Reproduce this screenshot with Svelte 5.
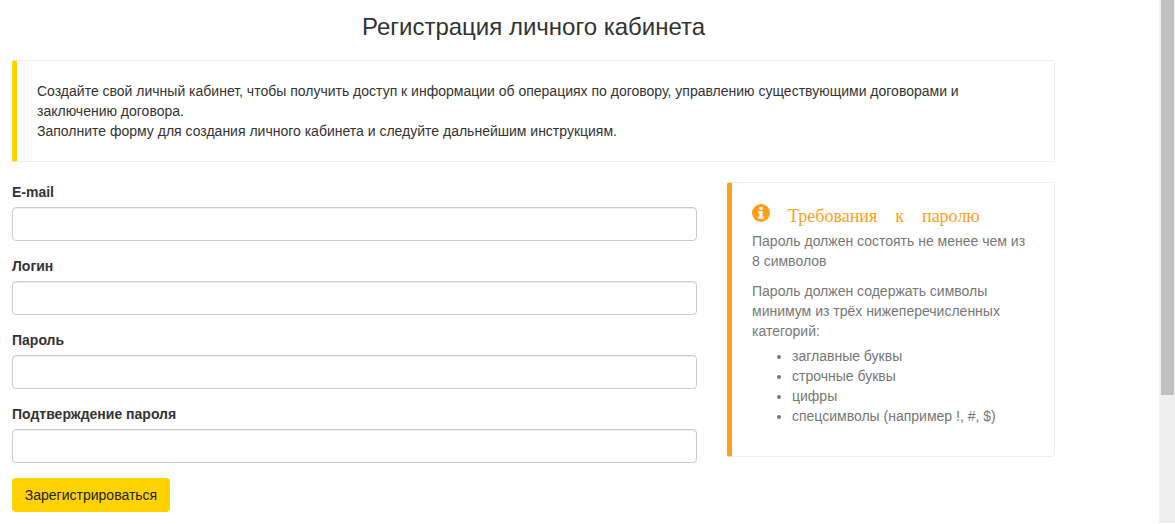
<script>
  const fields = ['E-mail', 'Логин', 'Пароль', 'Подтверждение пароля'];
  const rules = ['заглавные буквы', 'строчные буквы', 'цифры', 'спецсимволы (например !, #, $)'];
</script>

<div class="page">
  <main class="content">
    <h1>Регистрация личного кабинета</h1>
    <section class="intro">
      Создайте свой личный кабинет, чтобы получить доступ к информации об операциях по договору, управлению существующими договорами и заключению договора.<br />
      Заполните форму для создания личного кабинета и следуйте дальнейшим инструкциям.
    </section>
    <div class="columns">
      <form class="form">
        {#each fields as f}
          <div class="field">
            <label for={f}>{f}</label>
            <input id={f} type="text" />
          </div>
        {/each}
        <button type="button">Зарегистрироваться</button>
      </form>
      <aside class="note">
        <div class="note-head">
          <svg class="info" viewBox="0 0 18 18" width="18" height="18" aria-hidden="true">
            <circle cx="9" cy="9" r="9" fill="#ff9f1a" />
            <rect x="7.4" y="3" width="3.2" height="2.8" fill="#fff" />
            <path d="M6.2 7.2h4.4v5.6h1.2v2H6.2v-2h1.2V9.2H6.2z" fill="#fff" />
          </svg>
          <h4>Требования к паролю</h4>
        </div>
        <p>Пароль должен состоять не менее чем из 8 символов</p>
        <p class="lead">Пароль должен содержать символы минимум из трёх нижеперечисленных категорий:</p>
        <ul>
          {#each rules as r}<li>{r}</li>{/each}
        </ul>
      </aside>
    </div>
  </main>
  <div class="scrollbar"><div class="thumb"></div></div>
</div>

<style>
  :global(body) {
    margin: 0;
    background: #fff;
  }
  .page {
    display: flex;
    height: 523px;
    overflow: hidden;
    font-family: "Liberation Sans", Arial, sans-serif;
    font-size: 14px;
    line-height: 20px;
    color: #333;
  }
  .content {
    width: 1043px;
    margin-left: 12px;
    flex: none;
  }
  h1 {
    margin: 0;
    padding-top: 14px;
    height: 46px;
    box-sizing: border-box;
    font-size: 24px;
    line-height: 26px;
    font-weight: 400;
    text-align: center;
  }
  .intro {
    box-sizing: border-box;
    height: 102px;
    padding: 20px 20px 20px 20px;
    border: 1px solid #eee;
    border-left: 5px solid #ffd200;
    border-radius: 3px;
    margin-top: 14px;
    margin-bottom: 20px;
  }
  .columns {
    display: flex;
    justify-content: space-between;
    align-items: flex-start;
  }
  .form {
    width: 685px;
  }
  .field {
    margin-bottom: 15px;
  }
  label {
    display: block;
    font-weight: 700;
    margin-bottom: 5px;
  }
  input {
    display: block;
    box-sizing: border-box;
    width: 100%;
    height: 34px;
    border: 1px solid #ccc;
    border-radius: 4px;
    box-shadow: inset 0 1px 1px rgba(0, 0, 0, 0.075);
    background: #fff;
    padding: 6px 12px;
  }
  button {
    display: block;
    height: 34px;
    width: 158px;
    padding: 0;
    border: 0;
    border-radius: 4px;
    background: #ffd200;
    color: #222;
    font: inherit;
  }
  .note {
    box-sizing: border-box;
    width: 328px;
    height: 275px;
    padding: 20px;
    border: 1px solid #eee;
    border-left: 5px solid #ff9f1a;
    border-radius: 3px;
    color: #777;
  }
  .note-head {
    display: flex;
    align-items: flex-start;
    height: 28px;
  }
  .info {
    flex: none;
    margin-top: 1px;
    margin-right: 18px;
  }
  h4 {
    margin: 3px 0 0;
    font-family: "Liberation Serif", "Times New Roman", serif;
    font-size: 18px;
    line-height: 20px;
    font-weight: 400;
    color: #ff9f1a;
    word-spacing: 13.5px;
  }
  p {
    margin: 0 0 10px;
  }
  .lead {
    margin-bottom: 5px;
  }
  ul {
    margin: 0;
    padding-left: 40px;
  }
  .scrollbar {
    flex: none;
    margin-left: 104px;
    width: 16px;
    background: #efefef;
  }
  .thumb {
    margin-left: 2px;
    width: 13px;
    height: 395px;
    background: #c0c0c0;
  }
</style>
